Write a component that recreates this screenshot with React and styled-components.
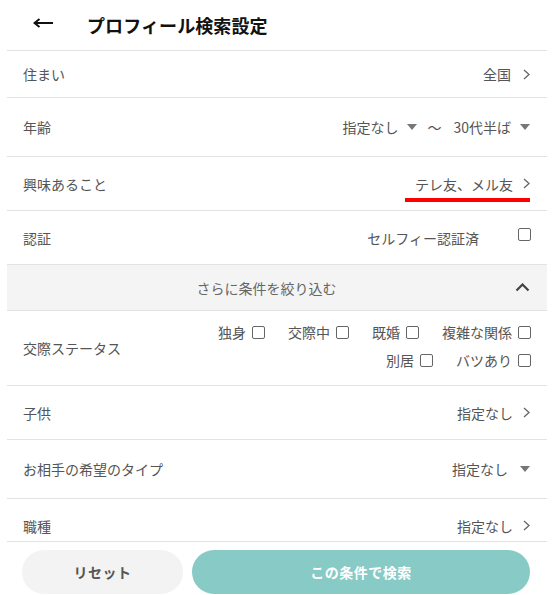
import React from "react";
import styled, { createGlobalStyle } from "styled-components";

const Global = createGlobalStyle`
  html, body { margin: 0; padding: 0; background: #fff; }
  body { font-family: "Noto Sans CJK JP", "Noto Sans", sans-serif; }
  * { box-sizing: border-box; }
`;

const Page = styled.div`
  width: 555px;
  height: 595px;
  padding: 0 8px 0 7px;
  display: flex;
  flex-direction: column;
  overflow: hidden;
  background: #fff;
`;

const Header = styled.header`
  height: 51px;
  flex: none;
  display: flex;
  align-items: center;
  padding-left: 26px;
  gap: 34px;
  border-bottom: 1px solid #e3e3e3;
`;

const BackButton = styled.button`
  border: 0;
  background: none;
  padding: 0;
  width: 20px;
  height: 10px;
  display: flex;
  align-items: center;
  margin-top: -5px;
  cursor: pointer;
`;

const Title = styled.h1`
  margin: 0;
  font-size: 18px;
  font-weight: 700;
  color: #111;
  line-height: 24px;
  letter-spacing: 0.1px;
`;

const Scroll = styled.main`
  flex: 1;
  min-height: 0;
  overflow: hidden;
`;

const Row = styled.div`
  height: ${(p) => p.$h}px;
  display: flex;
  align-items: center;
  justify-content: space-between;
  padding: 0 ${(p) => p.$pr ?? 17}px 0 16px;
  border-bottom: 1px solid #e3e3e3;
  background: ${(p) => (p.$muted ? "#f4f4f4" : "#fff")};
`;

const Label = styled.span`
  font-size: 14px;
  line-height: 20px;
  color: #555;
  flex: none;
`;

const Value = styled.span`
  position: relative;
  display: flex;
  align-items: center;
  font-size: 14px;
  line-height: 20px;
  color: #555;
  gap: ${(p) => p.$gap ?? 10}px;

  ${(p) =>
    p.$marked &&
    `&::after {
      content: "";
      position: absolute;
      left: -10px;
      right: 0;
      bottom: -8px;
      height: 4px;
      background: #f00;
    }`}
`;

const Group = styled.span`
  display: flex;
  align-items: center;
  gap: 9px;
`;

const Tilde = styled.span`
  margin-right: 2px;
`;

const Box = styled.span`
  display: block;
  width: 13px;
  height: 13px;
  border: 1px solid #666;
  border-radius: 2px;
  background: #fff;
  flex: none;
  margin-top: ${(p) => p.$up ?? 0}px;
`;

const ToggleText = styled.span`
  flex: 1;
  text-align: center;
  font-size: 14px;
  line-height: 20px;
  color: #666;
`;

const ToggleIcon = styled.span`
  width: 20px;
  display: flex;
  justify-content: flex-end;
`;

const Options = styled.div`
  max-width: 330px;
  display: flex;
  flex-wrap: wrap;
  justify-content: flex-end;
  column-gap: 23px;
  row-gap: 8px;
  margin-bottom: 4px;
`;

const Option = styled.label`
  display: flex;
  align-items: center;
  gap: 6px;
  font-size: 14px;
  line-height: 20px;
  color: #555;
`;

const Footer = styled.footer`
  flex: none;
  height: 54px;
  border-top: 1px solid #e3e3e3;
  padding: 8px 17px 1px 15px;
  display: flex;
  gap: 9px;
`;

const Button = styled.button`
  height: 44px;
  border: 0;
  border-radius: 22px;
  font-family: inherit;
  font-size: 14px;
  font-weight: 700;
  background: ${(p) => (p.$primary ? "#87cac6" : "#f3f3f3")};
  color: ${(p) => (p.$primary ? "#fff" : "#555")};
  width: ${(p) => (p.$primary ? "auto" : "161px")};
  flex: ${(p) => (p.$primary ? 1 : "none")};
  letter-spacing: 0.5px;
  cursor: pointer;
`;

const Chevron = () => (
  <svg width="7" height="11" viewBox="0 0 7 11">
    <polyline points="1,1 6,5.5 1,10" fill="none" stroke="#666" strokeWidth="1.3" />
  </svg>
);

const Caret = () => (
  <svg width="10" height="6" viewBox="0 0 10 6">
    <polygon points="0,0 10,0 5,6" fill="#777" />
  </svg>
);

const ChevronUp = () => (
  <svg width="15" height="9" viewBox="0 0 15 9">
    <polyline points="1.5,7.5 7.5,1.5 13.5,7.5" fill="none" stroke="#444" strokeWidth="2.2" />
  </svg>
);

const BackArrow = () => (
  <svg width="20" height="10" viewBox="0 0 20 10">
    <path d="M20 5 H2" stroke="#111" strokeWidth="2" />
    <path d="M6.5 1 L1.5 5 L6.5 9" fill="none" stroke="#111" strokeWidth="2" />
  </svg>
);

const statuses = ["独身", "交際中", "既婚", "複雑な関係", "別居", "バツあり"];

export default function App() {
  return (
    <>
      <Global />
      <Page>
        <Header>
          <BackButton aria-label="戻る">
            <BackArrow />
          </BackButton>
          <Title>プロフィール検索設定</Title>
        </Header>
        <Scroll>
          <Row $h={47}>
            <Label>住まい</Label>
            <Value $gap={12}>
              全国
              <Chevron />
            </Value>
          </Row>
          <Row $h={59}>
            <Label>年齢</Label>
            <Value>
              <Group>
                指定なし
                <Caret />
              </Group>
              <Tilde>〜</Tilde>
              <Group>
                30代半ば
                <Caret />
              </Group>
            </Value>
          </Row>
          <Row $h={54}>
            <Label>興味あること</Label>
            <Value $marked>
              テレ友、メル友
              <Chevron />
            </Value>
          </Row>
          <Row $h={54} $pr={16}>
            <Label>認証</Label>
            <Value $gap={39}>
              セルフィー認証済
              <Box $up={-6} />
            </Value>
          </Row>
          <Row $h={46} $muted>
            <ToggleText>さらに条件を絞り込む</ToggleText>
            <ToggleIcon>
              <ChevronUp />
            </ToggleIcon>
          </Row>
          <Row $h={75} $pr={16}>
            <Label>交際ステータス</Label>
            <Options>
              {statuses.map((s) => (
                <Option key={s}>
                  {s}
                  <Box />
                </Option>
              ))}
            </Options>
          </Row>
          <Row $h={54}>
            <Label>子供</Label>
            <Value>
              指定なし
              <Chevron />
            </Value>
          </Row>
          <Row $h={59}>
            <Label>お相手の希望のタイプ</Label>
            <Value $gap={12}>
              指定なし
              <Caret />
            </Value>
          </Row>
          <Row $h={54}>
            <Label>職種</Label>
            <Value>
              指定なし
              <Chevron />
            </Value>
          </Row>
        </Scroll>
        <Footer>
          <Button>リセット</Button>
          <Button $primary>この条件で検索</Button>
        </Footer>
      </Page>
    </>
  );
}
